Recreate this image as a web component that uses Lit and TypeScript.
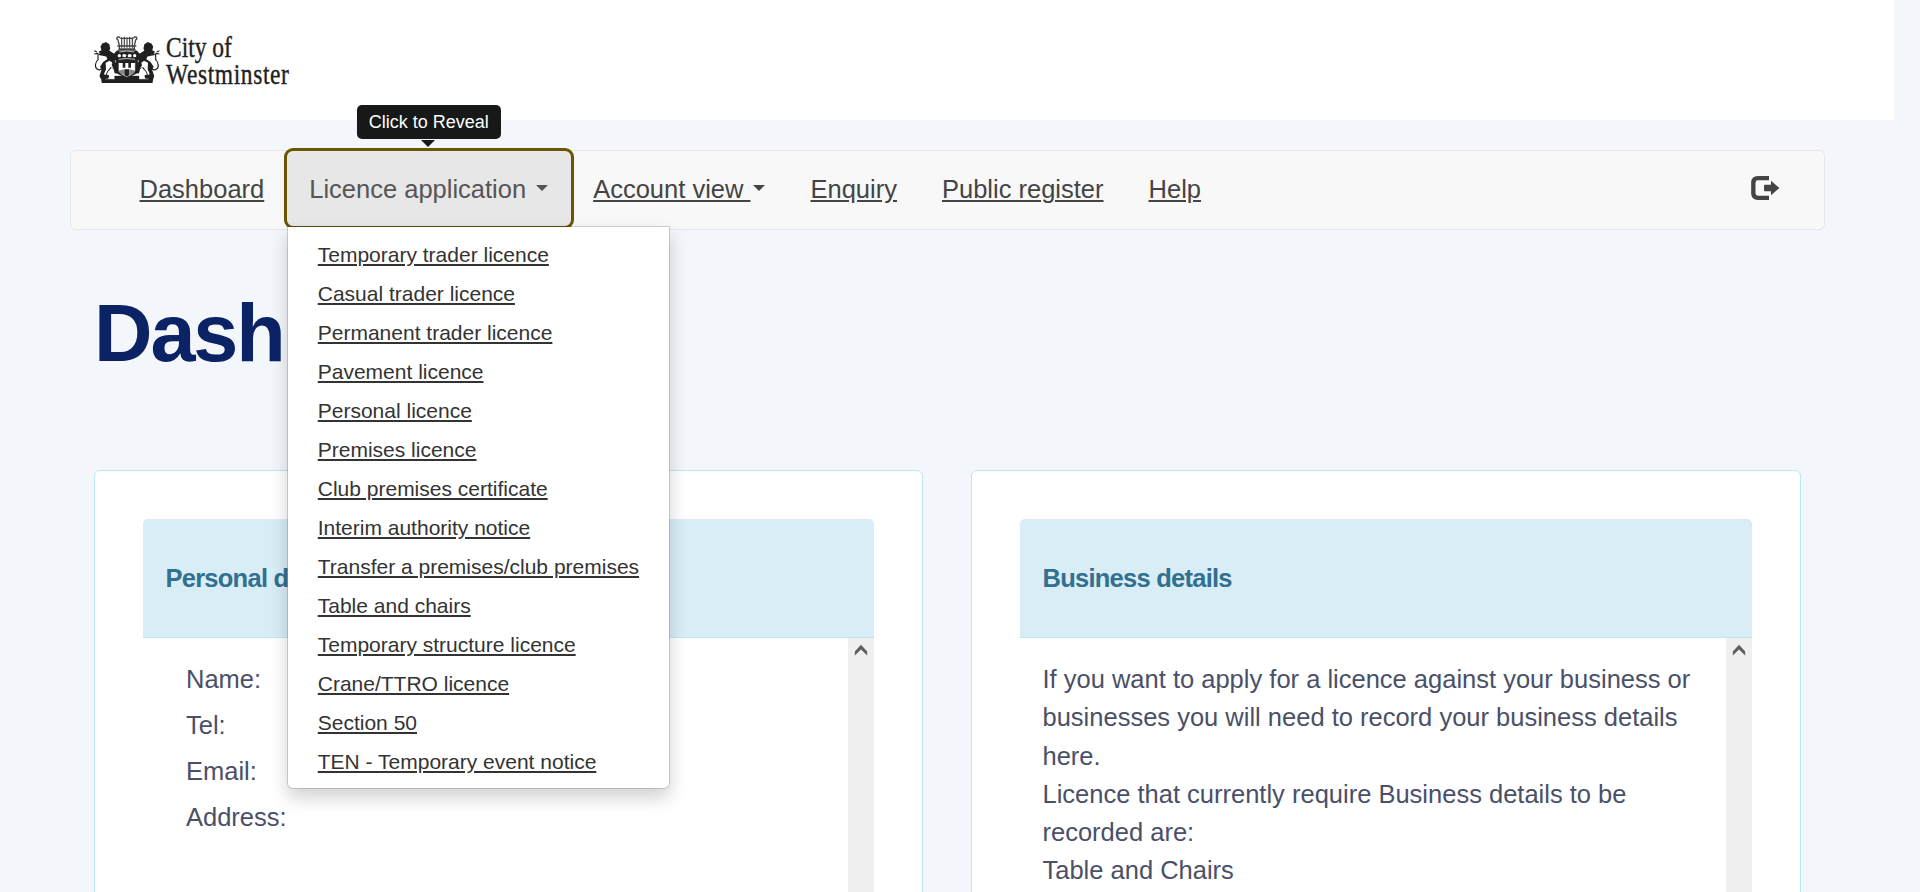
import { LitElement, html, css } from "lit";
import { customElement } from "lit/decorators.js";

const MENU = [
  "Temporary trader licence", "Casual trader licence", "Permanent trader licence", "Pavement licence",
  "Personal licence", "Premises licence", "Club premises certificate", "Interim authority notice",
  "Transfer a premises/club premises", "Table and chairs", "Temporary structure licence",
  "Crane/TTRO licence", "Section 50", "TEN - Temporary event notice",
];

@customElement("details-panel")
class DetailsPanel extends LitElement {
  static properties = { heading: { type: String } };
  declare heading: string;
  static styles = css`
    :host { display: block; box-sizing: border-box; border: 1px solid #bce8f1; border-radius: 6px; background: #fff; padding: 48px; height: 560px; box-shadow: 0 1px 1px rgba(0,0,0,.05); }
    .head { box-sizing: border-box; height: 119px; background: #d9edf7; border-bottom: 1px solid #bce8f1; border-radius: 5px 5px 0 0; padding: 0 22.5px; display: flex; align-items: center; color: #31708f; font-weight: 700; font-size: 25.5px; letter-spacing: -0.75px; }
    .scroll { display: flex; height: 400px; }
    .content { flex: 1; min-width: 0; }
    .bar { width: 26px; background: #f0f0f0; display: flex; justify-content: center; align-items: flex-start; padding-top: 6px; box-sizing: border-box; }
  `;
  render() {
    return html`
      <div class="head">${this.heading}</div>
      <div class="scroll">
        <div class="content"><slot></slot></div>
        <div class="bar">
          <svg width="14" height="12" viewBox="0 0 14 12"><path d="M.8 7.600 7 .8l6.200 6.800v3.800L7 5.600.8 11.400z" fill="#606060"/></svg>
        </div>
      </div>`;
  }
}

@customElement("app-root")
class AppRoot extends LitElement {
  static styles = css`
    :host { display: block; height: 892px; overflow: hidden; background: #f3f6fb; font-family: "Liberation Sans", Arial, sans-serif; color: #4a5068; font-size: 25.5px; line-height: 38.25px; }
    a { color: inherit; text-decoration: underline; }
    .header { box-sizing: border-box; width: 1894px; height: 120px; background: #fff; padding: 36px 0 0 94px; display: flex; align-items: flex-start; gap: 6px; }
    .brand { margin-top: -2px; font-family: "Liberation Serif", serif; color: #222; font-size: 29px; line-height: 27px; white-space: nowrap; transform-origin: 0 0; transform: scaleX(.81); -webkit-text-stroke: .4px #222; }
    .wide { letter-spacing: .75px; }
    .nav { box-sizing: border-box; display: flex; width: 1755px; height: 80px; margin: 30px 0 0 70px; border: 1px solid #e7e7e7; border-radius: 6px; background: #f8f8f8; padding-left: 46px; color: #444; }
    .item { position: relative; height: 77px; padding: 0 22.5px; display: flex; align-items: center; white-space: pre; }
    .open { height: 73px; padding-top: 2px; color: #555; background: #e7e7e7; outline: 3px solid #6a5500; border-radius: 6px; }
    .caret { border: 6px solid transparent; border-top-color: currentColor; border-bottom: 0; margin-left: 3px; margin-top: -4px; }
    .open .caret { margin-left: 10px; }
    .signout { margin-left: auto; padding: 24px 44px 0 0; line-height: 0; }
    .tip { position: absolute; left: 50%; transform: translateX(-50%); top: -46px; height: 34px; line-height: 34px; padding: 0 12px; font-size: 18px; background: #171918; color: #fff; border-radius: 5px; }
    .tip::after { content: ""; position: absolute; left: 50%; top: 35px; margin-left: -8px; border: 7px solid transparent; border-top-color: #171918; border-bottom: 0; }
    .menu { position: absolute; z-index: 5; left: 0; top: 75px; box-sizing: border-box; width: 383px; padding: 8.5px 0 6.5px; border: 1px solid rgba(0,0,0,.15); background: #fff; background-clip: padding-box; border-radius: 0 0 6px 6px; box-shadow: 0 9px 18px rgba(0,0,0,.175); font-size: 21px; line-height: 30px; color: #333; }
    .menu div { padding: 4.5px 30px; }
    h1 { margin: 55px 0 0 94px; font-size: 81px; line-height: 96px; letter-spacing: -2.1px; color: #0b2265; }
    .panels { display: grid; grid-template-columns: 829px 830px; gap: 48px; margin: 89px 0 0 94px; }
    .fields { padding: 18px 0 0 43px; }
    .fields div { height: 46px; line-height: 46px; }
    .copy { padding: 22.2px 0 0 22.5px; }
  `;
  render() {
    return html`
      <div class="header">
        <svg width="66" height="47" viewBox="12 18 198 141">
          <g fill="#202020" stroke="#202020" stroke-linejoin="round">
            <g id="beast">
              <path stroke-width="5" d="M34 50l5-8 9-3 8 6 2 10-3 8 16 10 12-3v12l-12 10 4 8 12 2 4 8-8 14-7 4-3-12-8-6-12 12-6 12 8 4-2 6H34l-3-6 6-18-4-10 8-12 14-10-4-10-12-3-10-2 8-4-8-3 8-4z"/>
              <path fill="none" stroke-width="3.5" d="M13 62l8 4M13 72l10-2c4 6-2 14 2 20M25 88c-10 8-12 24-3 30 6 4 12 0 14-4"/>
            </g>
            <use href="#beast" transform="translate(221 0) scale(-1 1)"/>
            <path stroke-width="1" d="M74 138h73v10h30l-2-14 16 4-4 21H36l-4-21 16-4-2 14h28z"/>
            <path stroke-width="2" d="M78 76c-5-8 0-14 8-14h49c8 0 13 6 8 14v52l-20 10H98L78 128z"/>
          </g>
          <path fill="#fff" stroke="#333" stroke-width="2" d="M85 93h51v25c0 12-14 18-25.500 24C99 136 85 130 85 118z"/>
          <g fill="#222"><path d="M85 93h51v6H85z"/><path d="M98 97h8v16h-8zM115 97h8v16h-8zM103 118h15v17l-7 5-8-5z"/></g>
          <path d="M85 122l18-4v17c-12-5-16-8-18-13zM136 122l-18-4v17c12-5 16-8 18-13z" fill="#888"/>
          <g fill="#fff"><ellipse cx="88" cy="77" rx="5" ry="5"/><ellipse cx="103" cy="77" rx="6" ry="5"/><ellipse cx="119" cy="77" rx="6" ry="5"/><ellipse cx="134" cy="77" rx="5" ry="5"/></g>
          <path d="M88 66q22-6 45 0M86 88q25-5 49 0" fill="none" stroke="#bbb" stroke-width="3"/>
          <g fill="none" stroke="#444" stroke-width="4"><path d="M82 29c-6-8 8-12 8-4M139 29c6-8-8-12-8-4M84 28c0 12 8 18 3 30h47c-5-12 3-18 3-30M82 48h57M90 57h41"/><path stroke-width="3.500" d="M95 22v31M103 20v33M111 22v31M119 20v33M127 22v31M91 25h39"/></g>
          <g fill="#fff"><path d="M47 98l12-6 8 6-2 8 5 8-9-2-9 12-6 12-4-4 6-14zM174 98l-12-6-8 6 2 8-5 8 9-2 9 12 6 12 4-4-6-14z"/></g>
        </svg>
        <div class="brand">City of<br><span class="wide">Westminster</span></div>
      </div>
      <div class="nav">
        <div class="item"><a>Dashboard</a></div>
        <div class="item open"><span>Licence application</span><i class="caret"></i>
          <div class="tip">Click to Reveal</div>
          <div class="menu">${MENU.map((m) => html`<div><a>${m}</a></div>`)}</div>
        </div>
        <div class="item"><a>Account view </a><i class="caret"></i></div>
        <div class="item"><a>Enquiry</a></div>
        <div class="item"><a>Public register</a></div>
        <div class="item"><a>Help</a></div>
        <div class="signout">
          <svg width="30" height="26" viewBox="30 30 90 78"><path d="M87 39.500H54Q40 39.500 40 53v32q0 13.500 14 13.500h33" fill="none" stroke="#444" stroke-width="13"/><path d="M75 59h18V47l25 22-25 22V79H75q-3 0-3-3V62q0-3 3-3z" fill="#444"/></svg>
        </div>
      </div>
      <h1>Dashboard</h1>
      <div class="panels">
        <details-panel heading="Personal details">
          <div class="fields">${["Name:", "Tel:", "Email:", "Address:"].map((f) => html`<div>${f}</div>`)}</div>
        </details-panel>
        <details-panel heading="Business details">
          <div class="copy">If you want to apply for a licence against your business or<br>businesses you will need to record your business details<br>here.<br>Licence that currently require Business details to be<br>recorded are:<br>Table and Chairs</div>
        </details-panel>
      </div>`;
  }
}
